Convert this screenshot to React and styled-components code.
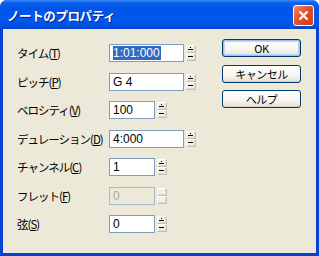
import React from "react";
import styled, { createGlobalStyle } from "styled-components";

const GlobalStyle = createGlobalStyle`
  html, body {
    margin: 0;
    padding: 0;
    background: #ffffff;
  }
  * {
    box-sizing: border-box;
  }
`;

const Window = styled.div`
  width: 319px;
  height: 256px;
  display: flex;
  flex-direction: column;
  background: #0841d6;
  border-radius: 7px 7px 0 0;
  overflow: hidden;
  font-family: "Noto Sans CJK JP", "Liberation Sans", sans-serif;
`;

const TitleBar = styled.div`
  height: 29px;
  flex: none;
  display: flex;
  align-items: center;
  justify-content: space-between;
  padding: 0 5px 0 7px;
  background: linear-gradient(
    to bottom,
    #3c8cf7 0%,
    #0a5fec 10%,
    #0055e8 30%,
    #0058ee 70%,
    #0050df 90%,
    #0046c8 100%
  );
`;

const Title = styled.div`
  color: #ffffff;
  font-size: 12.5px;
  font-weight: bold;
  letter-spacing: -0.4px;
  text-shadow: 1px 1px 0 #0a1e8a;
  padding-top: 2px;
`;

const CloseButton = styled.div`
  width: 21px;
  height: 21px;
  border: 1px solid #ffffff;
  border-radius: 3px;
  background: linear-gradient(135deg, #f08a64 0%, #e0532a 45%, #c8401c 100%);
  display: flex;
  align-items: center;
  justify-content: center;
  margin-top: 1px;
`;

const Frame = styled.div`
  flex: 1;
  margin: 0 3px 3px;
  background: #ece9d8;
  display: flex;
  align-items: flex-start;
  justify-content: space-between;
  padding: 10px 15px 0 14px;
`;

const Form = styled.div`
  margin-top: 5px;
  display: grid;
  grid-template-columns: 92px auto;
  grid-auto-rows: 18px;
  row-gap: 10.5px;
`;

const Label = styled.div`
  display: flex;
  align-items: center;
  font-size: 11.5px;
  letter-spacing: -1px;
  color: #000000;

  u {
    text-underline-offset: 1px;
  }
`;

const Field = styled.div`
  display: flex;
  align-items: flex-start;
  gap: 2px;
`;

const TextBox = styled.div`
  width: ${p => (p.$wide ? 75 : 46)}px;
  height: 18px;
  border: 1px solid ${p => (p.$disabled ? "#a5b8cf" : "#7f9db9")};
  background: ${p => (p.$disabled ? "#ece9d8" : "#ffffff")};
  color: ${p => (p.$disabled ? "#aca899" : "#000000")};
  font-family: "Liberation Sans", sans-serif;
  font-size: 12px;
  line-height: 14px;
  padding: 1px 0 0 3px;
  white-space: nowrap;
`;

const Selected = styled.span`
  background: #316ac5;
  color: #ffffff;
  padding: 0 1px 0 0;
`;

const Spinner = styled.div`
  display: flex;
  flex-direction: column;
  margin-top: 1px;
`;

const SpinButton = styled.div`
  width: 10px;
  height: 8px;
  background: #f2f0e6;
  border: 1px solid #c6c2b2;
  border-top-color: #ffffff;
  border-left-color: #ffffff;
  box-shadow: inset -1px -1px 0 #dedbcc;
  display: flex;
  align-items: center;
  justify-content: center;
`;

const Buttons = styled.div`
  display: flex;
  flex-direction: column;
  gap: 7.5px;
`;

const PushButton = styled.div`
  width: 79px;
  height: 18px;
  border: 1px solid #003c74;
  border-radius: 3px;
  background: linear-gradient(to bottom, #ffffff 0%, #f6f5f0 60%, #e3e0d2 100%);
  box-shadow: ${p =>
    p.$default
      ? "inset 0 0 0 1px #9dbcf0, inset 0 0 0 2px #c4d7f8"
      : "inset 0 -1px 0 #d6d0c5"};
  display: flex;
  align-items: center;
  justify-content: center;
  font-size: 11px;
  font-weight: normal;
  letter-spacing: -0.5px;
  color: #000000;
`;

function Arrow({ up }) {
  return (
    <svg width="6" height="4" viewBox="0 0 6 4">
      {up ? (
        <>
          <rect x="2" y="0" width="1" height="1" fill="#000" />
          <rect x="0" y="2" width="5" height="1" fill="#000" />
        </>
      ) : (
        <rect x="0" y="1" width="5" height="1" fill="#000" />
      )}
    </svg>
  );
}

function Spin({ disabled }) {
  return (
    <Spinner>
      <SpinButton>{!disabled && <Arrow up />}</SpinButton>
      <SpinButton>{!disabled && <Arrow />}</SpinButton>
    </Spinner>
  );
}

const rows = [
  { name: "タイム", key: "T", value: "1:01:000", wide: true, selected: true },
  { name: "ピッチ", key: "P", value: "G 4", wide: true },
  { name: "ベロシティ", key: "V", value: "100" },
  { name: "デュレーション", key: "D", value: "4:000", wide: true },
  { name: "チャンネル", key: "C", value: "1" },
  { name: "フレット", key: "F", value: "0", disabled: true },
  { name: "弦", key: "S", value: "0" },
];

export default function App() {
  return (
    <>
      <GlobalStyle />
      <Window>
        <TitleBar>
          <Title>ノートのプロパティ</Title>
          <CloseButton>
            <svg width="11" height="11" viewBox="0 0 11 11">
              <path d="M1.5 1.5 L9.5 9.5 M9.5 1.5 L1.5 9.5" stroke="#fff" strokeWidth="2.2" />
            </svg>
          </CloseButton>
        </TitleBar>
        <Frame>
          <Form>
            {rows.map(r => (
              <React.Fragment key={r.key}>
                <Label>
                  {r.name}(<u>{r.key}</u>)
                </Label>
                <Field>
                  <TextBox $wide={r.wide} $disabled={r.disabled}>
                    {r.selected ? <Selected>{r.value}</Selected> : r.value}
                  </TextBox>
                  <Spin disabled={r.disabled} />
                </Field>
              </React.Fragment>
            ))}
          </Form>
          <Buttons>
            <PushButton $default>OK</PushButton>
            <PushButton>キャンセル</PushButton>
            <PushButton>ヘルプ</PushButton>
          </Buttons>
        </Frame>
      </Window>
    </>
  );
}
